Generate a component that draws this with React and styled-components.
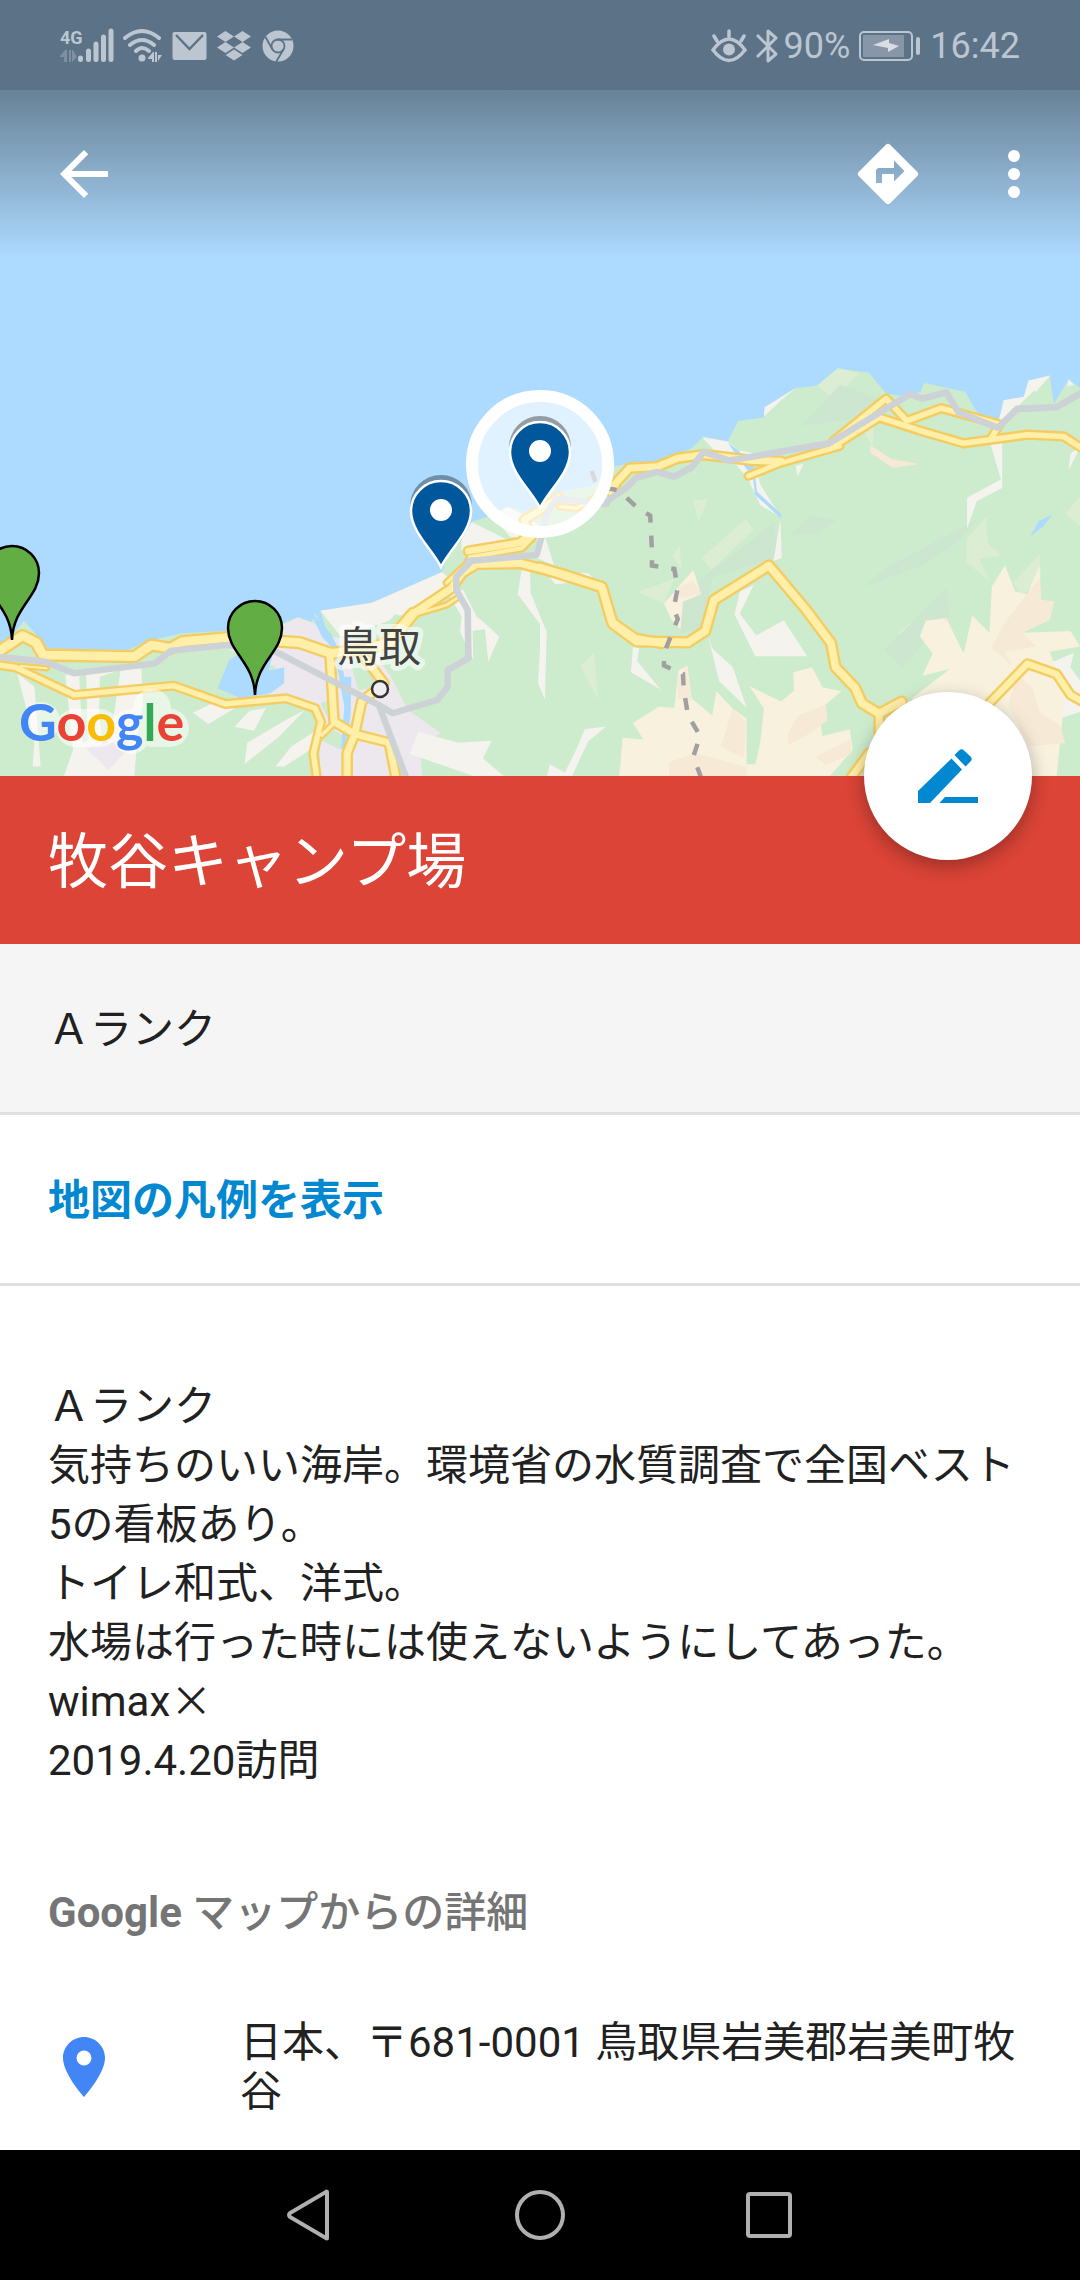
import styled, { createGlobalStyle } from "styled-components";

const colors = {
  statusBar: "#5b7287",
  statusIcon: "#bcc6d0",
  water: "#addaff",
  forest: "#cdebcd",
  meadow: "#dbeed3",
  sand: "#f5f3ee",
  town: "#ede8ed",
  hill: "#f7f1de",
  ridge: "#f6e9d5",
  road: "#ffefa8",
  roadEdge: "#f4cd62",
  rail: "#ccd2d5",
  pin: "#01579b",
  greenPin: "#62ae45",
  accent: "#db4437",
  link: "#0288d1",
  text: "#212121",
  muted: "#757575",
  line: "#e0e0e0",
};

const place = {
  name: "牧谷キャンプ場",
  rank: "Ａランク",
  postal: "日本、〒681-0001 鳥取県岩美郡岩美町牧谷",
};

const notes = [
  "Ａランク",
  "気持ちのいい海岸。環境省の水質調査で全国ベスト5の看板あり。",
  "トイレ和式、洋式。",
  "水場は行った時には使えないようにしてあった。",
];

const west = "translate(0 340) scale(.3444 .3333)";
const center = "translate(300 360) scale(.3333)";
const east = "translate(540 340) scale(.3444)";

const landShapes = [
  [west, colors.forest, "M0 915L40 880 70 842 110 890 130 930H370L440 900 530 880 660 872 820 850 865 832 905 845 915 820 950 880 930 812 1080 788 1283 695 1300 650 1340 600 1370 545 1430 525 1475 500 1520 515 1569 500V1310H0Z"],
  [east, colors.forest, "M-2 460L60 440 150 425 215 365 330 355 440 315 475 280 545 295 575 235 650 225 655 195 740 140 805 132 865 82 955 95 1005 155 1060 165 1105 150 1115 125 1235 150 1260 195 1290 235 1335 240 1345 175 1405 165 1418 118 1480 103 1492 185 1535 115 1570 140V1270H-2Z"],
  [west, colors.sand, "M930 812L1080 788 1283 697 1300 710 1290 745 1190 815 1110 850 990 890Z"],
  [west, colors.sand, "M1340 600L1370 547 1475 600 1400 630 1340 632ZM1430 525L1475 500 1510 520 1569 560 1569 600 1480 590Z"],
  [west, colors.sand, "M190 1005L410 970 415 1100 400 1180 390 1310H185L212 1230Z"],
  [west, colors.forest, "M230 1010L250 1000 255 1200 240 1210ZM290 1010L350 990 330 1130 300 1250 288 1120Z"],
  [west, colors.town, "M250 1225L380 1190 370 1230 315 1290Z"],
  [west, colors.sand, "M50 1000L100 1040 118 1280H95L100 1200 65 1060ZM560 1118L620 1088 690 1100 605 1152ZM680 1160L725 1112 772 1104 738 1172ZM710 1272L718 1208 830 1140 885 1110 810 1190ZM800 1280L845 1220 920 1170 915 1220 825 1280Z"],
  [west, colors.town, "M665 930L820 855 865 832 910 850 960 890 1050 900 1130 1000 1185 1110 1280 1180 1220 1210 1225 1310H930L925 1105 830 1070 780 1065 800 980Z"],
  [west, colors.forest, "M1010 940L1060 900 1110 1040 1040 1050ZM930 1090L970 1075 955 1140ZM930 1200L970 1170 1000 1190 990 1230Z"],
  [west, colors.sand, "M1215 1175L1330 1208 1428 1202 1402 1255 1465 1310H1380L1190 1242Z"],
  [west, colors.water, "M665 960L730 920 790 950 780 992 825 982V1030L785 1060 700 1075 632 1045ZM902 818L935 850 960 880 985 930 1000 1010 1020 1010 1018 1130 1000 1230 990 1225 1000 1100 970 930 935 890Z"],
  [center, colors.sand, "M445 700L490 690 530 770 550 785 598 830 565 905 555 808 518 812 520 900 480 815 485 770ZM665 630H690L692 700 740 815 735 1018 714 970 724 798 653 702ZM715 530H735L762 615 700 590ZM740 640L865 640 880 655 765 672Z"],
  [center, colors.meadow, "M842 918L882 878 893 1018Z"],
  [center, colors.forest, "M285 762L320 775 260 830 230 835Z"],
  [east, colors.meadow, "M805 132L865 82 925 97 855 172ZM470 632L598 520 620 552 497 668ZM445 465L488 462 460 528ZM285 732L390 693 360 765ZM385 625L405 597 412 670ZM120 945L155 910 170 1045ZM940 262L970 240 965 310ZM1240 575L1295 515 1300 590 1342 628 1275 635 1305 700 1238 645ZM1375 705L1450 622 1455 690 1400 745ZM1040 850L1115 790 1130 890ZM1525 505L1569 455V540Z"],
  [east, "#cde6cf", "M410 740L680 530 690 630 500 690 470 840 410 850ZM730 565L790 510 860 525 800 562ZM940 717L1000 665 1270 520 1220 580 1120 650ZM1000 900L1180 720 1190 800 1050 950ZM870 130L980 170 900 230 760 250Z"],
  [east, colors.sand, "M650 222L652 195 742 140 700 175ZM472 283L545 295 575 320 630 330 620 350 510 325ZM560 350L620 345 640 420 700 515 640 480 605 405ZM698 520L702 632 678 642ZM620 712L580 795 628 858 708 814 776 918H625L565 797 580 730ZM488 860L500 895 560 950 600 1068 520 990ZM270 890L288 895 282 932 350 1015 264 965ZM0 820L18 850 12 1040 0 1000ZM20 1268L28 1232 72 1256 105 1190 130 1130 192 1122 140 1165 92 1268ZM1305 290L1342 270V430L1268 468 1240 548 1240 458 1338 405ZM1330 240L1347 175 1405 165 1418 118 1480 103 1390 190ZM1420 135L1482 103 1440 150ZM1535 115L1550 130 1530 135ZM1465 945L1550 908 1540 950 1569 990V1080L1490 1105 1515 1058ZM1540 330L1569 310 1535 378ZM742 365L765 360 748 395ZM60 680L140 680 150 695 45 710Z"],
  [east, colors.hill, "M240 1155L300 1160 270 1112 345 1065 390 1068 402 960 428 945 440 1040 500 1090 512 1020 560 1070 600 1100V1232H625L640 1165 650 1070 608 1005 700 1050 738 1018 735 965 790 950 820 1008 875 1020 810 1075 820 1150 900 1130 908 1190 840 1268H230ZM360 765L445 667 468 738 415 760 408 840 380 810ZM1103 860L1120 815 1180 808 1230 910 1255 800 1305 850 1312 715 1350 655 1380 730 1415 740 1450 655 1455 755 1492 760 1480 812 1400 850 1540 845 1569 890 1480 905 1525 1020 1500 1268H1300L1080 1040 1190 955 1110 975 1140 910Z"],
  [east, colors.ridge, "M958 305L1020 345 1100 360 1025 372 960 328ZM375 1225L450 1200 600 1240 600 1268H375ZM560 1070L598 1110 592 1215 525 1180ZM720 1140L750 1090 830 1058 835 1105 770 1150 720 1175ZM400 985L425 950 440 1050 400 1040ZM800 1210L900 1160 905 1200 830 1235ZM1310 895L1350 820 1450 690 1455 755 1492 760 1480 812 1400 850 1440 890 1350 905 1370 945ZM1385 970L1430 1010 1450 1080 1510 1120 1525 1170 1420 1180 1360 1060ZM400 720L445 700 468 738 410 750ZM1160 808H1180L1188 822Z"],
  [east, colors.water, "M545 298L575 320 640 385 625 400 630 440 700 505 700 518 625 450 618 400ZM1424 570L1448 525 1487 508 1460 542Z"],
];

const roads = [
  [west, 40, "M-5 935L65 887 105 908 125 945 390 950 440 915 495 925 530 905 660 893 870 908 960 940 1060 930 1135 905 1200 820"],
  [west, 30, "M-5 975L45 982 215 1065 505 1037 655 1092 830 1075 915 1105 932 1145 910 1240 920 1315"],
  [west, 20, "M60 978L135 985"],
  [west, 34, "M958 945L970 1145 1030 1182 1130 1208 1150 1315"],
  [west, 34, "M1060 955L1115 1030 1050 1085 1030 1182 1008 1240V1315"],
  [west, 24, "M970 1150L935 1185"],
  [center, 36, "M260 850L330 768 455 685 485 640 530 612 660 610 780 640 905 680 935 785 1005 835 1085 850"],
  [center, 22, "M330 768L440 735 470 715"],
  [center, 24, "M440 668L500 612 510 590"],
  [center, 34, "M505 573L660 548 690 520 672 480 722 450 775 412"],
  [center, 26, "M510 592L665 565 700 530"],
  [center, 24, "M780 440L830 445 900 405"],
  [east, 34, "M205 440L225 410 260 372 340 368 400 343 475 333 620 350 700 352"],
  [east, 36, "M-2 660L180 718 212 825 280 875 430 878 480 845 505 755 665 655 770 780 845 880 858 950 915 1010 935 1055 985 1085 1050 1050"],
  [east, 34, "M985 1085V1150M900 1275L955 1200"],
  [east, 28, "M605 395L690 360 870 308"],
  [east, 30, "M850 295L1005 170 1065 235 1165 198 1335 245 1310 285"],
  [east, 30, "M850 310L985 225 1100 262 1230 300 1415 275 1520 280 1575 315"],
  [east, 32, "M1290 1070L1415 940 1500 970 1540 1030 1575 1050"],
];

const rails = [
  [west, "M-5 950L130 965 215 1000 450 970 495 933 660 915 800 935 1100 1095 1140 1120 1270 1080 1300 1040 1300 990 1360 955 1358 810 1325 750 1325 710 1370 662M1100 1095L1180 1315"],
  [center, "M505 603L710 585 725 530 740 460 770 415 920 432"],
  [east, "M190 470L250 430 280 400 340 383 390 397 440 370 475 325 550 350 840 300 1075 157 1110 170 1180 152 1215 210 1330 255 1385 200 1500 195 1575 152"],
];

const BluePin = ({ x, y }) => (
  <g transform={`translate(${x} ${y})`}>
    <path d="M-31 -4A31 31 0 0 1 31 -4L29 0H-29Z" fill="#000" fillOpacity=".35" />
    <path
      d="M0 57C-8 40 -30 22 -30 1A30 30 0 0 1 30 1C30 22 8 40 0 57Z"
      fill={colors.pin}
      stroke="#fff"
      strokeWidth="2.5"
    />
    <circle r="11" fill="#fff" />
  </g>
);

const GreenPin = ({ x, y }) => (
  <path
    transform={`translate(${x} ${y})`}
    d="M0 67C-1 34 -27 24 -27 0A27 27 0 0 1 27 0C27 24 1 34 0 67Z"
    fill={colors.greenPin}
    stroke="#000"
    strokeWidth="2.5"
  />
);

const PlaceMap = () => (
  <MapCanvas viewBox="0 0 1080 776" preserveAspectRatio="xMidYMax slice" role="img" aria-label="地図">
    <rect width="1080" height="776" fill={colors.water} />
    {landShapes.map(([tile, fill, d]) => (
      <path key={d} transform={tile} fill={fill} d={d} />
    ))}
    <g fill="none" strokeLinejoin="round" strokeLinecap="round">
      {roads.map(([tile, width, d]) => (
        <path key={d} transform={tile} stroke={colors.roadEdge} strokeWidth={width} d={d} />
      ))}
      {roads.map(([tile, width, d]) => (
        <path key={d} transform={tile} stroke={colors.road} strokeWidth={width - 14} d={d} />
      ))}
      {rails.map(([tile, d]) => (
        <path key={d} transform={tile} stroke={colors.rail} strokeWidth="19" d={d} />
      ))}
    </g>
    <path
      transform={east}
      fill="none"
      stroke="#a19fa1"
      strokeWidth="13"
      strokeDasharray="34 38"
      d="M150 380L165 425 230 437 280 485 320 510 325 610V655L390 665 400 720 388 780 400 810 360 910V945L415 970 418 1020 430 1090 465 1150 445 1210 467 1268"
    />

    <circle cx="540" cy="464" r="68" fill="#fff" fillOpacity=".62" stroke="#fff" strokeWidth="12" />
    <BluePin x={441} y={510} />
    <BluePin x={540} y={451} />
    <GreenPin x={12} y={573} />
    <GreenPin x={255} y={628} />

    <CityLabel x="337" y="662">鳥取</CityLabel>
    <circle cx="380" cy="689" r="8" fill="#eee" stroke="#333" strokeWidth="2.5" />

    <path
      d="M41 721V721M75 728H100M131 728V735M152 708V728H170"
      fill="none"
      stroke="#fff"
      strokeOpacity=".55"
      strokeWidth="38"
      strokeLinecap="round"
      strokeLinejoin="round"
    />
    <Wordmark x="19" y="741">
      <tspan fill="#4285f4">G</tspan>
      <tspan fill="#ea4335">o</tspan>
      <tspan fill="#fbbc05">o</tspan>
      <tspan fill="#4285f4">g</tspan>
      <tspan fill="#34a853">l</tspan>
      <tspan fill="#ea4335">e</tspan>
    </Wordmark>
  </MapCanvas>
);

const SignalIcon = () => (
  <svg width="54" height="36" viewBox="0 0 54 36" fill="currentColor">
    <NetworkText x="0" y="16">4G</NetworkText>
    <path opacity=".35" d="M0 28L5 22H7V34H4V29H0ZM9 22H11V34H9ZM12 22H13L17 29 12 34Z" />
    <g stroke="currentColor" strokeWidth="5" strokeLinecap="round">
      <path d="M20.500 30V31.500M28.500 23V31.500M36 16V31.500M43.500 9V31.500M51 3V31.500" />
    </g>
  </svg>
);

const WifiIcon = () => (
  <svg width="40" height="36" viewBox="0 0 40 36" fill="none" stroke="currentColor" strokeWidth="4" strokeLinecap="round">
    <path d="M2 10Q19 -4 36 10M7 17Q19 7 31 17M13 23Q19 17 26 23" />
    <circle cx="19" cy="30" r="3.500" fill="currentColor" stroke="none" />
    <path fill="currentColor" stroke="none" d="M25 30L30 24H31V34H29V31H25ZM32 24H34V34H32ZM35 27H39L35 33Z" />
  </svg>
);

const MailIcon = () => (
  <svg width="36" height="30" viewBox="0 0 36 30">
    <rect x=".5" y="1" width="34" height="28" rx="2" fill="currentColor" />
    <path d="M4 4L17.500 18 31 4" fill="none" stroke={colors.statusBar} strokeWidth="2.500" />
  </svg>
);

const DropboxIcon = () => (
  <svg width="36" height="30" viewBox="0 0 36 30" fill="currentColor">
    <path d="M8.500 0L17 5.500 8.500 11 0 5.500ZM25.500 0L34 5.500 25.500 11 17 5.500ZM8.500 11L17 16.500 8.500 22 0 16.500ZM25.500 11L34 16.500 25.500 22 17 16.500ZM17 18.500L25.500 24 17 29.500 8.500 24Z" />
  </svg>
);

const ChromeIcon = () => (
  <svg width="32" height="32" viewBox="0 0 32 32">
    <circle cx="16" cy="16" r="15.500" fill="currentColor" />
    <g fill="none" stroke={colors.statusBar} strokeWidth="1.800">
      <circle cx="16" cy="16" r="6.500" />
      <path d="M15 9.500H30M10.500 19.500L3.500 7M21.500 19.500L14 32" />
    </g>
  </svg>
);

const EyeIcon = () => (
  <svg width="36" height="34" viewBox="0 0 36 34" fill="none" stroke="currentColor" strokeWidth="3.500" strokeLinecap="round">
    <path d="M2 21Q18 -1 34 21Q18 42 2 21ZM18 2V8M3 7L6 12M33 7L30 12" />
    <circle cx="18" cy="20.500" r="6" fill="currentColor" stroke="none" />
  </svg>
);

const BluetoothIcon = () => (
  <svg width="22" height="36" viewBox="0 0 22 36" fill="none" stroke="currentColor" strokeWidth="3" strokeLinejoin="round">
    <path d="M1 7L20 26 12 33V3L20 10 1 29" />
  </svg>
);

const BatteryIcon = () => (
  <svg width="62" height="30" viewBox="0 0 62 30">
    <rect x="1" y="1" width="52" height="28" rx="4" fill="none" stroke="currentColor" strokeWidth="2" />
    <rect x="4" y="4" width="41" height="22" rx="1" fill="currentColor" opacity=".45" />
    <path d="M14 14L30 8V12L40 15 29 21V17Z" fill="#d8dee4" />
    <rect x="57" y="6" width="4" height="18" rx="2" fill="currentColor" />
  </svg>
);

const App = () => (
  <>
    <GlobalStyle />
    <Screen>
      <Hero>
        <PlaceMap />
        <TopBars>
          <StatusBar>
            <StatusGroup gap="9px">
              <SignalIcon />
              <WifiIcon />
              <MailIcon />
              <DropboxIcon />
              <ChromeIcon />
            </StatusGroup>
            <StatusGroup gap="9px">
              <EyeIcon />
              <BluetoothGroup>
                <BluetoothIcon />
                <span>90%</span>
              </BluetoothGroup>
              <BatteryIcon />
              <span>16:42</span>
            </StatusGroup>
          </StatusBar>
          <AppBar>
            <IconButton aria-label="戻る">
              <svg width="72" height="72" viewBox="0 0 24 24" fill="currentColor">
                <path d="M20 11H7.830l5.590-5.590L12 4l-8 8 8 8 1.410-1.410L7.830 13H20v-2z" />
              </svg>
            </IconButton>
            <AppBarActions>
              <IconButton aria-label="経路">
                <svg width="72" height="72" viewBox="0 0 24 24" fill="currentColor">
                  <path d="M21.710 11.290l-9-9a1 1 0 0 0-1.420 0l-9 9a1 1 0 0 0 0 1.420l9 9a1 1 0 0 0 1.420 0l9-9a1 1 0 0 0 0-1.420zM14 14.500V12h-4v3H8v-4c0-.550.450-1 1-1h5V7.500l3.500 3.500-3.500 3.500z" />
                </svg>
              </IconButton>
              <IconButton aria-label="その他">
                <svg width="72" height="72" viewBox="0 0 24 24" fill="currentColor">
                  <circle cx="12" cy="6" r="2" />
                  <circle cx="12" cy="12" r="2" />
                  <circle cx="12" cy="18" r="2" />
                </svg>
              </IconButton>
            </AppBarActions>
          </AppBar>
        </TopBars>
      </Hero>

      <TitleBar>
        <Title>{place.name}</Title>
        <EditButton aria-label="編集">
          <svg width="60" height="54" viewBox="0 0 60 54" fill="currentColor">
            <path d="M0 42L33.500 9.500 44 20.500 12 54H0ZM36.500 6L41 1.500Q43.500-1 46 1.500L52.500 7.500Q55 10 52.500 12.500L47.500 17.500ZM21.500 54L27 48H60V54Z" />
          </svg>
        </EditButton>
      </TitleBar>

      <RankRow>{place.rank}</RankRow>
      <LegendRow>
        <LegendLink href="#legend">地図の凡例を表示</LegendLink>
      </LegendRow>

      <Details>
        <Notes>
          {notes.map((note) => (
            <p key={note}>{note}</p>
          ))}
          <p>
            wimax<Cross>×</Cross>
          </p>
          <p>2019.4.20訪問</p>
        </Notes>
        <SectionTitle>
          <strong>Google</strong> マップからの詳細
        </SectionTitle>
        <AddressRow>
          <svg width="72" height="72" viewBox="0 0 24 24" fill="#4285f4">
            <path d="M12 2C8.130 2 5 5.130 5 9c0 5.250 7 13 7 13s7-7.750 7-13c0-3.870-3.130-7-7-7zm0 9.500a2.500 2.500 0 0 1 0-5 2.500 2.500 0 0 1 0 5z" />
          </svg>
          <Address>{place.postal}</Address>
        </AddressRow>
      </Details>

      <NavBar>
        <NavButton aria-label="戻る">
          <svg width="52" height="52" viewBox="0 0 52 52">
            <path d="M41 3V49Q41 50 40 49L4 28Q2 26 4 24L40 3Q41 2 41 3Z" />
          </svg>
        </NavButton>
        <NavButton aria-label="ホーム">
          <svg width="52" height="52" viewBox="0 0 52 52">
            <circle cx="26" cy="26" r="23" />
          </svg>
        </NavButton>
        <NavButton aria-label="履歴">
          <svg width="52" height="52" viewBox="0 0 52 52">
            <rect x="6" y="5" width="42" height="42" rx="2" />
          </svg>
        </NavButton>
      </NavBar>
    </Screen>
  </>
);

export default App;

const GlobalStyle = createGlobalStyle`
  * {
    box-sizing: border-box;
  }
  body {
    margin: 0;
    background-color: #fff;
    color: ${colors.text};
    font-family: Roboto, "Noto Sans CJK JP", sans-serif;
    font-size: 42px;
  }
  p, h1, h2 {
    margin: 0;
  }
  button {
    display: flex;
    align-items: center;
    justify-content: center;
    padding: 0;
    border: none;
    background: none;
    cursor: pointer;
  }
  svg {
    display: block;
    flex-shrink: 0;
  }
`;

const Screen = styled.div`
  display: flex;
  flex-direction: column;
  min-height: 100vh;
`;

const Hero = styled.header`
  display: grid;

  & > * {
    grid-area: 1 / 1;
  }
`;

const MapCanvas = styled.svg`
  width: 100%;
  height: 776px;
`;

const CityLabel = styled.text`
  font-family: "Noto Sans CJK JP", sans-serif;
  font-size: 42px;
  fill: #424242;
  stroke: rgba(255, 255, 255, 0.6);
  stroke-width: 10px;
  stroke-linejoin: round;
  paint-order: stroke;
`;

const Wordmark = styled.text`
  font-family: Lato, sans-serif;
  font-size: 52px;
  font-weight: 700;
`;

const NetworkText = styled.text`
  font-family: "Liberation Sans Narrow", Roboto, sans-serif;
  font-size: 18px;
  font-weight: 700;
`;

const TopBars = styled.div`
  align-self: start;
  z-index: 1;
`;

const StatusBar = styled.div`
  display: flex;
  align-items: center;
  justify-content: space-between;
  height: 90px;
  padding: 2px 60px 0;
  background-color: ${colors.statusBar};
  color: ${colors.statusIcon};
  font-size: 36px;
`;

const StatusGroup = styled.div`
  display: flex;
  align-items: center;
  gap: ${({ gap }) => gap};
`;

const BluetoothGroup = styled.div`
  display: flex;
  align-items: center;
  gap: 6px;
`;

const AppBar = styled.div`
  display: flex;
  align-items: center;
  justify-content: space-between;
  height: 168px;
  padding: 0 30px 0 48px;
  color: #fff;
  background: linear-gradient(#688297, ${colors.water});
`;

const AppBarActions = styled.div`
  display: flex;
  gap: 54px;
`;

const IconButton = styled.button`
  color: inherit;
`;

const TitleBar = styled.div`
  position: relative;
  display: flex;
  align-items: center;
  min-height: 168px;
  padding: 6px 48px 0;
  background-color: ${colors.accent};
`;

const Title = styled.h1`
  color: #fff;
  font-size: 60px;
  font-weight: 400;
  line-height: 72px;
`;

const EditButton = styled.button`
  position: absolute;
  top: -84px;
  right: 48px;
  width: 168px;
  height: 168px;
  border-radius: 50%;
  background-color: #fff;
  color: ${colors.link};
  box-shadow: 0 6px 18px rgba(0, 0, 0, 0.3);
`;

const RankRow = styled.div`
  display: flex;
  align-items: center;
  min-height: 171px;
  padding: 0 48px 6px;
  background-color: #f5f5f5;
  border-bottom: 3px solid ${colors.line};
`;

const LegendRow = styled(RankRow)`
  background-color: #fff;
`;

const LegendLink = styled.a`
  color: ${colors.link};
  font-weight: 700;
  text-decoration: none;
`;

const Details = styled.main`
  flex: 1;
  padding: 91px 48px 32px;
`;

const Notes = styled.div`
  line-height: 59px;
`;

const Cross = styled.span`
  font-family: "Noto Sans CJK JP", sans-serif;
  line-height: 1;
`;

const SectionTitle = styled.h2`
  margin-top: 98px;
  color: ${colors.muted};
  font-size: 42px;
  font-weight: 500;
  line-height: 50px;
`;

const AddressRow = styled.div`
  display: flex;
  align-items: center;
  gap: 120px;
  margin-top: 80px;
`;

const Address = styled.p`
  line-height: 49px;
`;

const NavBar = styled.nav`
  display: flex;
  align-items: center;
  justify-content: center;
  gap: 100px;
  height: 130px;
  background-color: #000;
`;

const NavButton = styled.button`
  width: 128px;
  height: 130px;

  & svg {
    fill: none;
    stroke: #b0b0b0;
    stroke-width: 4px;
  }
`;
